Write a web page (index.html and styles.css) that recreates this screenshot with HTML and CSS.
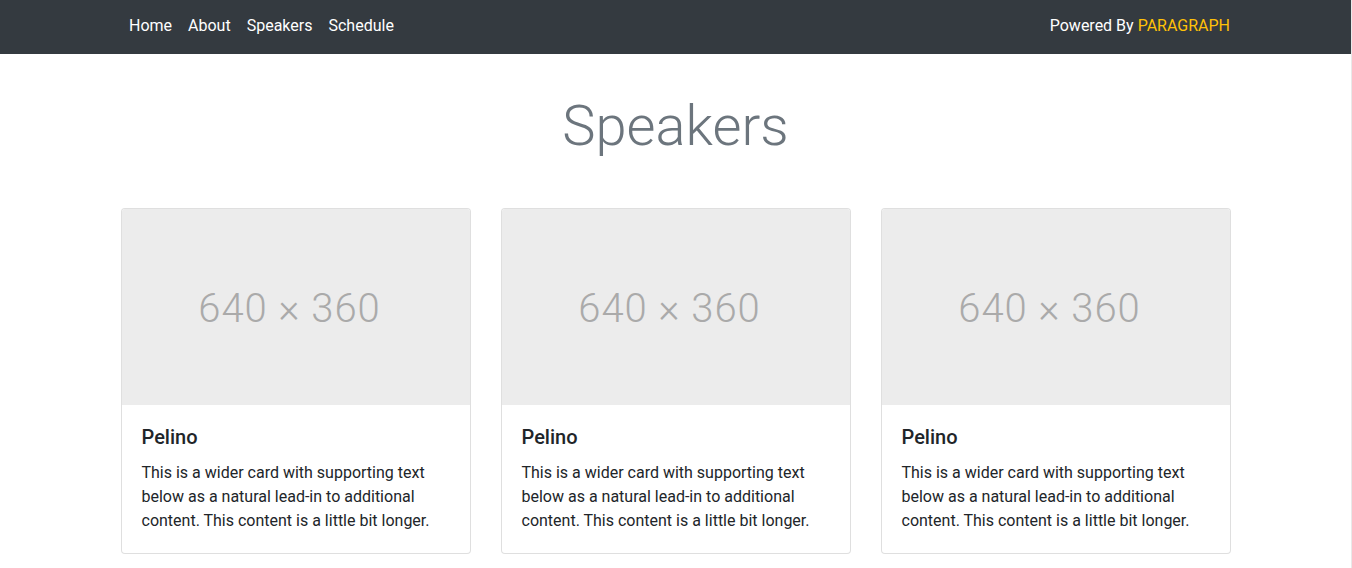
FILE: index.html
```html
<!DOCTYPE html>
<html lang="en">
<head>
<meta charset="utf-8">
<title>Speakers</title>
<link rel="stylesheet" href="styles.css">
</head>
<body>
<nav class="navbar">
  <div class="container nav-inner">
    <ul class="nav-links">
      <li><a class="nav-link" href="#">Home</a></li>
      <li><a class="nav-link" href="#">About</a></li>
      <li><a class="nav-link" href="#">Speakers</a></li>
      <li><a class="nav-link" href="#">Schedule</a></li>
    </ul>
    <span class="navbar-text">Powered By <span class="brand">PARAGRAPH</span></span>
  </div>
</nav>
<main class="container">
  <h1 class="page-title">Speakers</h1>
  <div class="card-grid">
    <div class="card">
      <div class="card-img"><span>640 × 360</span></div>
      <div class="card-body">
        <h5 class="card-title">Pelino</h5>
        <p class="card-text">This is a wider card with supporting text below as a natural lead-in to additional content. This content is a little bit longer.</p>
      </div>
    </div>
    <div class="card">
      <div class="card-img"><span>640 × 360</span></div>
      <div class="card-body">
        <h5 class="card-title">Pelino</h5>
        <p class="card-text">This is a wider card with supporting text below as a natural lead-in to additional content. This content is a little bit longer.</p>
      </div>
    </div>
    <div class="card">
      <div class="card-img"><span>640 × 360</span></div>
      <div class="card-body">
        <h5 class="card-title">Pelino</h5>
        <p class="card-text">This is a wider card with supporting text below as a natural lead-in to additional content. This content is a little bit longer.</p>
      </div>
    </div>
  </div>
</main>
</body>
</html>
```
FILE: styles.css
```css
* { box-sizing: border-box; }
html, body { margin: 0; padding: 0; }
body {
  font-family: Roboto, "Liberation Sans", Arial, sans-serif;
  font-size: 16px;
  line-height: 1.5;
  color: #212529;
  background: #fff;
  border-right: 1px solid #e9e9e9;
  min-height: 568px;
}
.container {
  width: 1140px;
  margin: 0 auto;
  padding: 0 15px;
}
.navbar {
  background: #343a40;
  height: 54px;
  padding-top: 6px;
  margin-right: -1px;
}
.nav-inner {
  display: flex;
  justify-content: space-between;
  align-items: flex-start;
}
.nav-links {
  display: flex;
  list-style: none;
  margin: 0;
  padding: 0;
}
.nav-link {
  display: block;
  padding: 8px 8px;
  color: #fff;
  text-decoration: none;
}
.navbar-text {
  padding: 8px 1px 8px 0;
  color: #fff;
}
.brand { color: #ffc107; }
.page-title {
  margin: 39px 0 48px;
  text-align: center;
  font-size: 56px;
  font-weight: 300;
  line-height: 1.2;
  color: #6c757d;
}
.card-grid {
  display: grid;
  grid-template-columns: repeat(3, 1fr);
  gap: 30px;
}
.card {
  border: 1px solid rgba(0,0,0,.125);
  border-radius: 4px;
  overflow: hidden;
  background: #fff;
}
.card-img {
  height: 196px;
  background: #ececec;
  display: flex;
  align-items: center;
  justify-content: center;
  padding: 4px 12px 0 0;
  color: #aaa;
  font-size: 40px;
  font-weight: 300;
  letter-spacing: 1px;
}
.card-body { padding: 20px; }
.card-title {
  margin: 0 0 12px;
  font-size: 20px;
  font-weight: 500;
  line-height: 1.2;
}
.card-text { margin: 0; }
```
